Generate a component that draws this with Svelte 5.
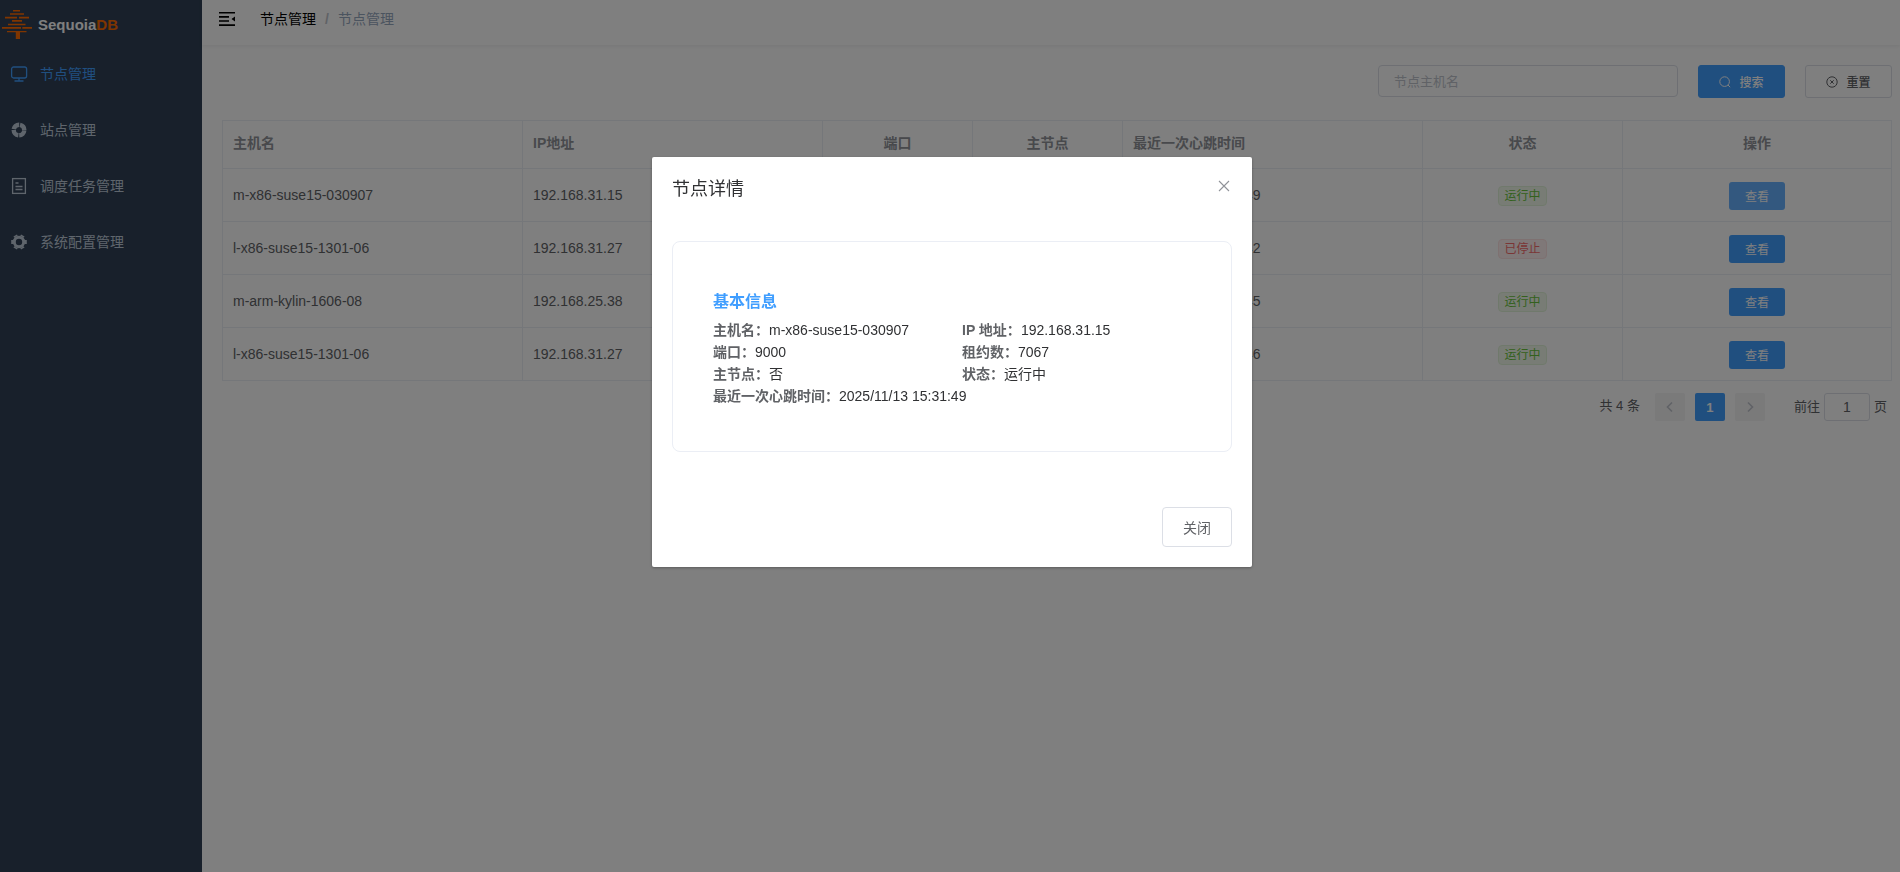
<script lang="ts">
  let keyword = $state("");
  let page = $state("1");
  let showDetail = $state(true);

  const menus = [
    { title: "节点管理", icon: "monitor", active: true },
    { title: "站点管理", icon: "help", active: false },
    { title: "调度任务管理", icon: "tickets", active: false },
    { title: "系统配置管理", icon: "tools", active: false }
  ];

  const nodes = [
    { hostname: "m-x86-suse15-030907", ip: "192.168.31.15", port: 9000, master: false, time: "2025/11/13 15:31:49", running: true, lease: 7067 },
    { hostname: "l-x86-suse15-1301-06", ip: "192.168.31.27", port: 9000, master: false, time: "2025/11/13 15:31:42", running: false, lease: 0 },
    { hostname: "m-arm-kylin-1606-08", ip: "192.168.25.38", port: 9000, master: true, time: "2025/11/13 15:31:45", running: true, lease: 7067 },
    { hostname: "l-x86-suse15-1301-06", ip: "192.168.31.27", port: 9010, master: false, time: "2025/11/13 15:31:46", running: true, lease: 7067 }
  ];

  let current = $state(nodes[0]);

  function openDetail(node) {
    current = node;
    showDetail = true;
  }

  function closeDetail() {
    showDetail = false;
  }

  function statusText(node) {
    return node.running ? "运行中" : "已停止";
  }
</script>

<div class="app">
  <aside class="sidebar">
    <div class="logo">
      <svg width="32" height="32" viewBox="0 0 32 32" fill="#ff6a00">
        <path d="M12 2h7v1.6h-7zM9 5.2h14v1.6H9zM4 8.8h12v1.6H4zM18 8.8h10v1.6H18zM11 12h10v1.8H11zM7 15.8h17.500v1.400H7zM1 19h19v1.8H1zM21.300 19H31v1.8h-9.700zM6 23h19.500v1.200H19V31h-4.200v-6.800H6z" />
      </svg>
      <span>Sequoia<em>DB</em></span>
    </div>
    <nav>
      {#each menus as menu}
        <a href="#menu" class="menu-item" class:active={menu.active}>
          {#if menu.icon === "monitor"}
            <svg width="18" height="18" viewBox="0 0 18 18" fill="none" stroke="currentColor" stroke-width="1.3">
              <rect x="1.600" y="2" width="15" height="11" rx="2" />
              <path d="M9 13v2.800M4.500 16h9" />
            </svg>
          {:else if menu.icon === "help"}
            <svg width="18" height="18" viewBox="0 0 18 18" fill="none" stroke="currentColor">
              <circle cx="9" cy="9" r="5.300" stroke-width="4.400" stroke-dasharray="7.420 0.905" stroke-dashoffset="-0.450" />
            </svg>
          {:else if menu.icon === "tickets"}
            <svg width="18" height="18" viewBox="0 0 18 18" fill="none" stroke="currentColor" stroke-width="1.3">
              <rect x="2.600" y="1.600" width="12.800" height="14.800" />
              <path d="M5.500 6h3M5.500 9.500h7M5.500 12.500h7" />
            </svg>
          {:else}
            <svg width="18" height="18" viewBox="0 0 18 18" fill="none" stroke="currentColor">
              <circle cx="9" cy="9" r="4.700" stroke-width="3" />
              <path d="M6 3.800L5.200 2.400M12 3.800l.8-1.400M14.500 9h2.300M12 14.200l.8 1.400M6 14.200l-.8 1.400M3.500 9H1.200" stroke-width="4" />
            </svg>
          {/if}
          <span>{menu.title}</span>
        </a>
      {/each}
    </nav>
  </aside>

  <div class="main">
    <header class="navbar">
      <button class="fold" aria-label="折叠菜单">
        <svg width="16" height="14" viewBox="0 0 16 14" fill="#000">
          <path d="M0 0h16v1.600H0zM0 4.100h10v1.600H0zM0 8.200h10v1.600H0zM0 12.300h16v1.600H0zM16 4.500v5L12.500 7z" />
        </svg>
      </button>
      <div class="breadcrumb">
        <a href="#home">节点管理</a>
        <span class="separator">/</span>
        <span class="here">节点管理</span>
      </div>
    </header>

    <main class="content">
      <form class="search" onsubmit={(e) => e.preventDefault()}>
        <input type="text" bind:value={keyword} placeholder="节点主机名" aria-label="节点主机名" />
        <button type="submit" class="btn primary">
          <svg width="12" height="12" viewBox="0 0 12 12" fill="none" stroke="currentColor">
            <circle cx="5.600" cy="5.600" r="4.800" />
            <path d="M9 9l2.200 2.200" />
          </svg>
          搜索
        </button>
        <button type="button" class="btn" onclick={() => (keyword = "")}>
          <svg width="12" height="12" viewBox="0 0 12 12" fill="none" stroke="currentColor">
            <circle cx="6" cy="6" r="5.200" />
            <path d="M4.300 4.300l3.400 3.400M7.700 4.300L4.300 7.700" />
          </svg>
          重置
        </button>
      </form>

      <table>
        <colgroup>
          <col class="w-300" />
          <col class="w-300" />
          <col class="w-150" />
          <col class="w-150" />
          <col class="w-300" />
          <col class="w-200" />
          <col />
        </colgroup>
        <thead>
          <tr>
            <th>主机名</th>
            <th>IP地址</th>
            <th class="center">端口</th>
            <th class="center">主节点</th>
            <th>最近一次心跳时间</th>
            <th class="center">状态</th>
            <th class="center">操作</th>
          </tr>
        </thead>
        <tbody>
          {#each nodes as node, i}
            <tr>
              <td>{node.hostname}</td>
              <td>{node.ip}</td>
              <td class="center">{node.port}</td>
              <td class="center">{node.master ? "是" : "否"}</td>
              <td>{node.time}</td>
              <td class="center">
                <span class="tag" class:danger={!node.running}>{statusText(node)}</span>
              </td>
              <td class="center">
                <button class="view" class:focused={i === 0} onclick={() => openDetail(node)}>查看</button>
              </td>
            </tr>
          {/each}
        </tbody>
      </table>

      <div class="pagination">
        <span class="total">共 {nodes.length} 条</span>
        <button class="pager" disabled aria-label="上一页">
          <svg width="12" height="12" viewBox="0 0 12 12" fill="none" stroke="currentColor" stroke-width="1.6">
            <path d="M8 1.500L3.500 6 8 10.500" />
          </svg>
        </button>
        <button class="pager current">1</button>
        <button class="pager" disabled aria-label="下一页">
          <svg width="12" height="12" viewBox="0 0 12 12" fill="none" stroke="currentColor" stroke-width="1.6">
            <path d="M4 1.500L8.500 6 4 10.500" />
          </svg>
        </button>
        <label class="jump">前往<input type="text" bind:value={page} />页</label>
      </div>
    </main>
  </div>
</div>

{#if showDetail}
  <div class="overlay">
    <div class="dialog" role="dialog" aria-modal="true" aria-labelledby="dialog-title">
      <div class="dialog-header">
        <h2 id="dialog-title">节点详情</h2>
        <button class="close" aria-label="关闭" onclick={closeDetail}>
          <svg width="12" height="12" viewBox="0 0 12 12" fill="none" stroke="#909399" stroke-width="1.1">
            <path d="M1 1l10 10M11 1L1 11" />
          </svg>
        </button>
      </div>
      <div class="dialog-body">
        <section class="card">
          <h3>基本信息</h3>
          <div class="info">
            <p><strong>主机名：</strong>{current.hostname}</p>
            <p><strong>IP 地址：</strong>{current.ip}</p>
            <p><strong>端口：</strong>{current.port}</p>
            <p><strong>租约数：</strong>{current.lease}</p>
            <p><strong>主节点：</strong>{current.master ? "是" : "否"}</p>
            <p><strong>状态：</strong>{statusText(current)}</p>
            <p class="wide"><strong>最近一次心跳时间：</strong>{current.time}</p>
          </div>
        </section>
      </div>
      <div class="dialog-footer">
        <button class="close-btn" onclick={closeDetail}>关闭</button>
      </div>
    </div>
  </div>
{/if}

<style>
  :global(body) {
    margin: 0;
    background: #fff;
    font-family: "Liberation Sans", "Noto Sans CJK SC", sans-serif;
    font-size: 14px;
    color: #606266;
  }

  * {
    box-sizing: border-box;
  }

  button, input {
    font-family: inherit;
    margin: 0;
  }

  button {
    cursor: pointer;
  }

  a {
    text-decoration: none;
  }

  .app {
    display: flex;
    min-height: 100vh;
  }

  .sidebar {
    flex: 0 0 202px;
    background: #304156;
  }

  .logo {
    display: flex;
    align-items: center;
    gap: 5px;
    height: 46px;
    padding: 2px 0 0 1px;
    color: #fff;
    font-size: 15px;
    font-weight: bold;
  }

  .logo em {
    font-style: normal;
    color: #ff6a00;
  }

  .menu-item {
    display: flex;
    align-items: center;
    gap: 12px;
    height: 56px;
    padding-left: 10px;
    color: #bfcbd9;
    line-height: 20px;
  }

  .menu-item.active {
    color: #409eff;
  }

  .main {
    flex: 1;
    min-width: 0;
  }

  .navbar {
    display: flex;
    align-items: center;
    gap: 25px;
    height: 45px;
    padding: 0 17px 7px;
    box-shadow: 0 1px 4px rgba(0, 21, 41, 0.08);
  }

  .fold {
    display: flex;
    padding: 0;
    border: none;
    background: none;
  }

  .breadcrumb {
    display: flex;
    align-items: center;
    gap: 9px;
    line-height: 20px;
  }

  .breadcrumb a {
    color: #000;
  }

  .separator {
    color: #c0c4cc;
    font-weight: bold;
  }

  .here {
    color: #97a8be;
  }

  .content {
    padding: 20px 8px 20px 20px;
  }

  .search {
    display: flex;
    justify-content: flex-end;
    gap: 20px;
    margin-bottom: 22px;
  }

  .search input {
    width: 300px;
    height: 32px;
    padding: 0 15px;
    border: 1px solid #dcdfe6;
    border-radius: 4px;
    font-size: 13px;
    color: #606266;
  }

  input::placeholder {
    color: #c0c4cc;
  }

  .btn {
    display: flex;
    align-items: center;
    justify-content: center;
    gap: 8px;
    width: 87px;
    height: 33px;
    padding: 0;
    border: 1px solid #dcdfe6;
    border-radius: 3px;
    background: #fff;
    color: #606266;
    font-size: 12px;
    font-weight: 500;
  }

  .btn.primary {
    border-color: #409eff;
    background: #409eff;
    color: #fff;
  }

  table {
    width: 100%;
    table-layout: fixed;
    border-collapse: collapse;
  }

  .w-300 {
    width: 300px;
  }

  .w-200 {
    width: 200px;
  }

  .w-150 {
    width: 150px;
  }

  th, td {
    height: 53px;
    padding: 1px 10px 0;
    border: 1px solid #ebeef5;
    text-align: left;
    font-size: 14px;
    line-height: 23px;
  }

  th {
    height: 48px;
    padding: 0 10px 2px;
    color: #909399;
    font-weight: bold;
  }

  th.center, td.center {
    text-align: center;
  }

  .tag {
    display: inline-block;
    height: 20px;
    padding: 0 5px;
    border: 1px solid #e1f3d8;
    border-radius: 4px;
    background: #f0f9eb;
    color: #67c23a;
    font-size: 12px;
    line-height: 18px;
    vertical-align: middle;
  }

  .tag.danger {
    border-color: #fde2e2;
    background: #fef0f0;
    color: #f56c6c;
  }

  .view {
    width: 56px;
    height: 28px;
    padding: 0;
    border: none;
    border-radius: 3px;
    background: #409eff;
    color: #fff;
    font-size: 12px;
    vertical-align: middle;
  }

  .view.focused {
    background: #66b1ff;
  }

  .pagination {
    display: flex;
    align-items: center;
    justify-content: flex-end;
    gap: 10px;
    margin-top: 12px;
    padding-right: 5px;
    font-size: 13px;
    line-height: 28px;
  }

  .total {
    margin-right: 5px;
    line-height: 26px;
    align-self: flex-start;
  }

  .pager {
    display: flex;
    align-items: center;
    justify-content: center;
    width: 30px;
    height: 28px;
    padding: 0;
    border: none;
    border-radius: 2px;
    background: #f4f4f5;
    color: #c0c4cc;
    font-size: 13px;
    font-weight: bold;
  }

  .pager.current {
    background: #409eff;
    color: #fff;
  }

  .jump {
    display: flex;
    align-items: center;
    gap: 4px;
    margin-left: 19px;
  }

  .jump input {
    width: 46px;
    height: 28px;
    padding: 0;
    border: 1px solid #dcdfe6;
    border-radius: 3px;
    color: #606266;
    font-size: 14px;
    text-align: center;
  }

  .overlay {
    position: fixed;
    inset: 0;
    padding-left: 4px;
    background: rgba(0, 0, 0, 0.5);
  }

  .dialog {
    width: 600px;
    margin: 18vh auto 0;
    border-radius: 2px;
    background: #fff;
    box-shadow: 0 1px 3px rgba(0, 0, 0, 0.3);
  }

  .dialog-header {
    display: flex;
    justify-content: space-between;
    padding: 20px 20px 10px;
  }

  h2 {
    margin: 0;
    color: #303133;
    font-size: 18px;
    font-weight: normal;
    line-height: 24px;
  }

  .close {
    display: flex;
    align-self: flex-start;
    padding: 3px 2px;
    border: none;
    background: none;
  }

  .dialog-body {
    padding: 30px 20px;
  }

  .card {
    margin-bottom: 15px;
    padding: 48px 40px 44px;
    border: 1px solid #ebeef5;
    border-radius: 8px;
  }

  h3 {
    margin: 0 0 5px;
    color: #409eff;
    font-size: 16px;
    line-height: 24px;
  }

  .info {
    display: grid;
    grid-template-columns: 1fr 1fr;
    column-gap: 20px;
  }

  .info p {
    margin: 0;
    color: #303133;
    line-height: 22px;
  }

  .info strong {
    color: #606266;
  }

  .info .wide {
    grid-column: span 2;
  }

  .dialog-footer {
    padding: 10px 20px 20px;
    text-align: right;
  }

  .close-btn {
    width: 70px;
    height: 40px;
    padding: 0;
    border: 1px solid #dcdfe6;
    border-radius: 4px;
    background: #fff;
    color: #606266;
    font-size: 14px;
    vertical-align: top;
  }
</style>
